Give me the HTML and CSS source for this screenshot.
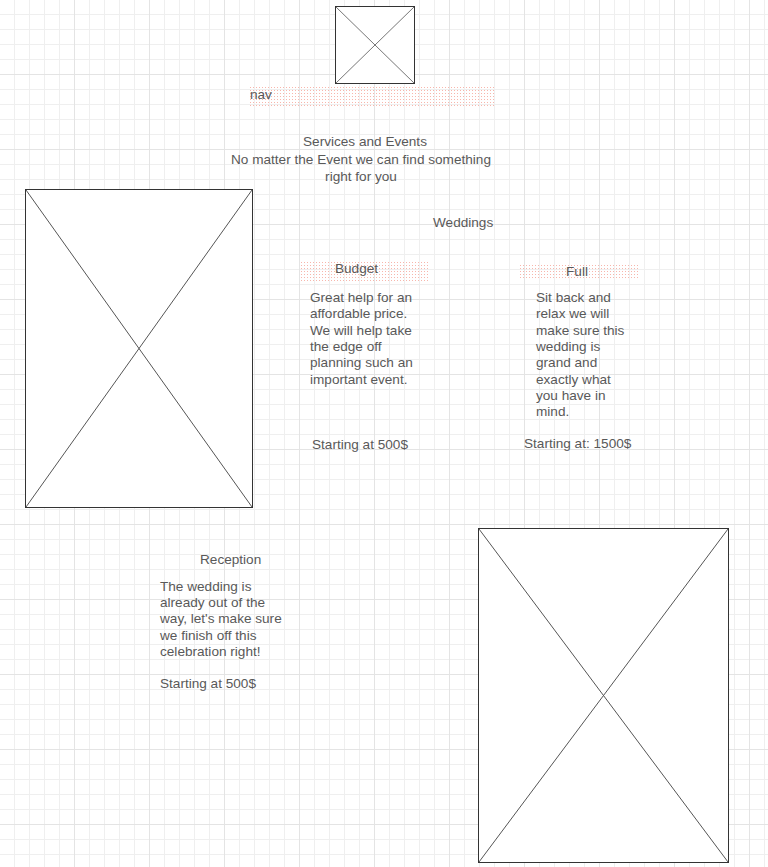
FILE: index.html
```html
<!DOCTYPE html>
<html>
<head>
<meta charset="utf-8">
<link rel="stylesheet" href="styles.css">
</head>
<body>
<header class="top">
  <svg class="logo" width="80" height="78" viewBox="0 0 80 78">
    <rect x="0.5" y="0.5" width="79" height="77" fill="#fff" stroke="#333"/>
    <path d="M1 1 L79 77 M79 1 L1 77" stroke="#777" stroke-width="1" fill="none"/>
  </svg>
  <nav class="nav dotted">nav</nav>
</header>

<section class="intro">
  <div class="title">Services and Events</div>
  <div class="sub">No matter the Event we can find something right for you</div>
</section>

<section class="row-main">
  <svg class="pic pic-left" width="228" height="319" viewBox="0 0 228 319">
    <rect x="0.5" y="0.5" width="227" height="318" fill="#fff" stroke="#333"/>
    <path d="M1 1 L227 318 M227 1 L1 318" stroke="#555" stroke-width="1" fill="none"/>
  </svg>
  <div class="weddings">
    <div class="wed-title">Weddings</div>
    <div class="plans">
      <div class="plan plan-budget">
        <div class="plan-head dotted">Budget</div>
        <p class="plan-text">Great help for an affordable price. We will help take the edge off planning such an important event.</p>
        <div class="price">Starting at 500$</div>
      </div>
      <div class="plan plan-full">
        <div class="plan-head dotted">Full</div>
        <p class="plan-text">Sit back and relax we will make sure this wedding is grand and exactly what you have in mind.</p>
        <div class="price">Starting at: 1500$</div>
      </div>
    </div>
  </div>
</section>

<section class="row-reception">
  <div class="reception">
    <div class="rec-title">Reception</div>
    <p class="rec-text">The wedding is already out of the way, let's make sure we finish off this celebration right!<br><br>Starting at 500$</p>
  </div>
  <svg class="pic pic-right" width="251" height="335" viewBox="0 0 251 335">
    <rect x="0.5" y="0.5" width="250" height="334" fill="#fff" stroke="#333"/>
    <path d="M1 1 L250 334 M250 1 L1 334" stroke="#555" stroke-width="1" fill="none"/>
  </svg>
</section>
</body>
</html>
```

FILE: styles.css
```css
html {
  background-color: #fff;
}
body {
  margin: 0;
  width: 768px;
  min-height: 867px;
  padding-top: 6px;
  box-sizing: border-box;
  font-family: "Liberation Sans", Arial, sans-serif;
  font-size: 13.6px;
  line-height: 16.3px;
  color: #595959;
  background-color: #fff;
  background-image:
    linear-gradient(to right, #e4e4e4 1px, transparent 1px),
    linear-gradient(to bottom, #e4e4e4 1px, transparent 1px),
    linear-gradient(to right, #efefef 1px, transparent 1px),
    linear-gradient(to bottom, #efefef 1px, transparent 1px);
  background-size: 75px 75px, 75px 75px, 15px 15px, 15px 15px;
  background-position: 74px 74px, 74px 74px, 14px 14px, 14px 14px;
  overflow: hidden;
}
p { margin: 0; }
svg { display: block; }

.dotted {
  background-color: transparent;
  background-image:
    radial-gradient(circle at 1.5px 1.5px, rgba(240, 110, 90, 0.5) 0.75px, transparent 1px);
  background-size: 3px 3px;
  background-position: 0 0;
}

.logo {
  margin-left: 335px;
}
.nav {
  margin-top: 2px;
  margin-left: 249px;
  width: 246px;
  height: 20px;
  line-height: 18px;
  padding-left: 1px;
  box-sizing: border-box;
}

.intro {
  margin-top: 28px;
  text-align: center;
}
.title {
  margin-left: 230px;
  width: 270px;
}
.sub {
  margin-left: 226px;
  width: 270px;
  margin-top: 2px;
}

.row-main {
  margin-top: 4px;
  display: flex;
  align-items: flex-start;
}
.pic-left {
  margin-left: 25px;
  flex: none;
}
.weddings {
  flex: 1;
}
.wed-title {
  margin-top: 26px;
  margin-left: 180px;
  width: 60px;
  text-align: center;
}
.plans {
  display: flex;
  align-items: flex-start;
  margin-top: 30px;
}
.plan-head {
  text-align: center;
  box-sizing: border-box;
}
.plan-budget {
  margin-left: 47px;
  width: 129px;
}
.plan-budget .plan-head {
  height: 20px;
  line-height: 15px;
  padding-right: 16px;
}
.plan-budget .plan-text {
  margin-top: 9px;
  padding-left: 10px;
  width: 112px;
}
.plan-budget .price {
  margin-top: 49px;
  padding-left: 12px;
}
.plan-full {
  margin-left: 90px;
  width: 120px;
  margin-top: 3px;
}
.plan-full .plan-head {
  height: 16px;
  line-height: 15px;
  padding-right: 4px;
}
.plan-full .plan-text {
  margin-top: 10px;
  padding-left: 17px;
  width: 96px;
}
.plan-full .price {
  margin-top: 15px;
  padding-left: 5px;
  white-space: nowrap;
}

.row-reception {
  margin-top: 20px;
  display: flex;
  align-items: flex-start;
}
.reception {
  margin-left: 160px;
  width: 130px;
  margin-top: 24px;
}
.rec-title {
  padding-left: 40px;
}
.rec-text {
  margin-top: 10.5px;
}
.pic-right {
  margin-left: auto;
  margin-right: 39px;
  flex: none;
}
```
